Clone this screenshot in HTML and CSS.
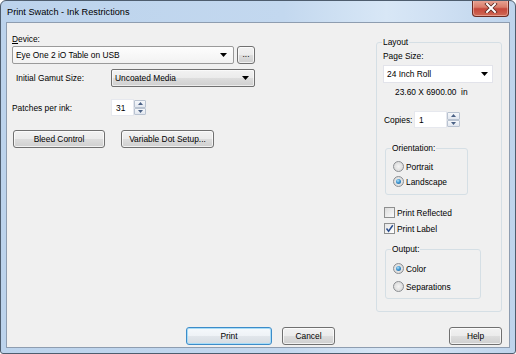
FILE: index.html
```html
<!DOCTYPE html>
<html>
<head>
<meta charset="utf-8">
<link rel="stylesheet" href="styles.css">
</head>
<body>
<div class="window">
  <div class="titlebar">
    <span class="title">Print Swatch - Ink Restrictions</span>
    <div class="close">
      <svg width="14" height="10" viewBox="0 0 14 10"><path d="M3 1 L11 9 M11 1 L3 9" stroke="#5a2a22" stroke-width="3.6" stroke-linecap="square" fill="none"/><path d="M3 1 L11 9 M11 1 L3 9" stroke="#ffffff" stroke-width="2" stroke-linecap="square" fill="none"/></svg>
    </div>
  </div>
  <div class="client">
    <div class="main">
      <div class="left">
        <div class="lbl"><span class="ul">D</span>evice:</div>
        <div class="row device-row">
          <div class="combo combo-light device-combo"><span>Eye One 2 iO Table on USB</span><svg class="arrow" width="7" height="4" viewBox="0 0 7 4"><path d="M0 0 H7 L3.5 4 Z" fill="#000"/></svg></div>
          <div class="btn dots-btn">...</div>
        </div>
        <div class="row gamut-row">
          <span class="row-lbl indent">Initial Gamut Size:</span>
          <div class="combo combo-btn gamut-combo"><span>Uncoated Media</span><svg class="arrow" width="7" height="4" viewBox="0 0 7 4"><path d="M0 0 H7 L3.5 4 Z" fill="#000"/></svg></div>
        </div>
        <div class="row patches-row">
          <span class="row-lbl">Patches per ink:</span>
          <div class="spin">
            <div class="spin-input small">31</div>
            <div class="spin-btns">
              <div class="spin-b"><svg width="5" height="3" viewBox="0 0 5 3"><path d="M0 3 H5 L2.5 0 Z" fill="#4a6185"/></svg></div>
              <div class="spin-b"><svg width="5" height="3" viewBox="0 0 5 3"><path d="M0 0 H5 L2.5 3 Z" fill="#4a6185"/></svg></div>
            </div>
          </div>
        </div>
        <div class="row btn-row">
          <div class="btn bleed-btn">Bleed Control</div>
          <div class="btn vdot-btn">Variable Dot Setup...</div>
        </div>
      </div>
      <div class="group layout-group">
        <span class="legend">Layout</span>
        <div class="lbl">Page Size:</div>
        <div class="combo combo-white page-combo"><span>24 Inch Roll</span><svg class="arrow" width="7" height="4" viewBox="0 0 7 4"><path d="M0 0 H7 L3.5 4 Z" fill="#000"/></svg></div>
        <div class="lbl dims">23.60 X 6900.00 &nbsp;in</div>
        <div class="row copies-row">
          <span class="copies-lbl">Copies:</span>
          <div class="spin">
            <div class="spin-input wide">1</div>
            <div class="spin-btns">
              <div class="spin-b"><svg width="5" height="3" viewBox="0 0 5 3"><path d="M0 3 H5 L2.5 0 Z" fill="#4a6185"/></svg></div>
              <div class="spin-b"><svg width="5" height="3" viewBox="0 0 5 3"><path d="M0 0 H5 L2.5 3 Z" fill="#4a6185"/></svg></div>
            </div>
          </div>
        </div>
        <div class="group orient-group">
          <span class="legend">Orientation:</span>
          <div class="opt"><span class="radio"></span>Portrait</div>
          <div class="opt"><span class="radio on"></span>Landscape</div>
        </div>
        <div class="chk-row first"><span class="chk"></span>Print Reflected</div>
        <div class="chk-row"><span class="chk on"><svg width="9" height="9" viewBox="0 0 9 9"><path d="M1.5 4.5 L3.6 7.2 L7.8 1.2" stroke="#2c4f8f" stroke-width="1.5" fill="none"/></svg></span>Print Label</div>
        <div class="group output-group">
          <span class="legend">Output:</span>
          <div class="opt"><span class="radio on"></span>Color</div>
          <div class="opt gap"><span class="radio"></span>Separations</div>
        </div>
      </div>
    </div>
    <div class="footer">
      <div class="btn print-btn">Print</div>
      <div class="btn cancel-btn">Cancel</div>
      <div class="btn help-btn">Help</div>
    </div>
  </div>
</div>
</body>
</html>
```

FILE: styles.css
```css
* { box-sizing: border-box; }
body {
  margin: 0;
  background: #ffffff;
  font-family: "Liberation Sans", Arial, sans-serif;
  font-size: 8.4px;
  color: #000;
}
.window {
  width: 516px;
  height: 354px;
  border: 1px solid #4e5d6e;
  border-radius: 6px 6px 3px 3px;
  background: linear-gradient(90deg, #bcd3ec 0%, #c3d8ef 55%, #d8e7f6 75%, #cfe0f3 85%, #bed4ec 100%);
  padding: 0 5px 5px 5px;
  display: flex;
  flex-direction: column;
  overflow: hidden;
}
.titlebar {
  height: 21px;
  display: flex;
  align-items: flex-start;
  padding-left: 1px;
}
.title {
  font-size: 9.2px;
  line-height: 12px;
  margin-top: 5px;
  color: #000;
}
.close {
  margin-left: auto;
  margin-right: 1px;
  margin-top: -1px;
  width: 37px;
  height: 17px;
  border: 1px solid #6b2b22;
  border-top: none;
  border-radius: 0 0 4px 4px;
  background: linear-gradient(#e9a797 0%, #d97c6a 45%, #c5473a 55%, #cf6a55 100%);
  box-shadow: inset 0 0 0 1px rgba(255,220,210,0.45);
  display: flex;
  align-items: center;
  justify-content: center;
}
.client {
  flex: 1;
  border: 1px solid #8e9db0;
  background: #f0f0f0;
  display: flex;
  flex-direction: column;
  padding: 0 7px 0 5px;
}
.main {
  display: flex;
  justify-content: space-between;
}
.left {
  width: 243px;
  padding-top: 10px;
}
.lbl { line-height: 12px; height: 12px; }
.ul { text-decoration: underline; }
.row { display: flex; align-items: center; }
.device-row { margin-top: 1px; height: 18px; }
.gamut-row { margin-top: 5px; height: 18px; }
.patches-row { margin-top: 12px; height: 17px; }
.btn-row { margin-top: 14px; height: 18px; }
.row-lbl { width: 99px; flex: none; }
.row-lbl.indent { padding-left: 4px; }

.combo {
  height: 18px;
  display: flex;
  align-items: center;
  padding-left: 3px;
  border-radius: 2px;
}
.combo .arrow { margin-left: auto; flex: none; }
.combo-light {
  border: 1px solid #9a9a9a;
  background: linear-gradient(#fdfdfd, #f2f2f2);
}
.device-combo { width: 222px; }
.device-combo .arrow { margin-right: 6px; }
.combo-btn {
  border: 1px solid #707070;
  background: linear-gradient(#f2f2f2 0%, #ebebeb 50%, #dddddd 51%, #cfcfcf 100%);
  box-shadow: inset 0 0 0 1px rgba(255,255,255,0.6);
}
.gamut-combo { width: 144px; }
.gamut-combo .arrow { margin-right: 5px; }
.combo-white {
  border: 1px solid #e2e3ea;
  background: #ffffff;
  border-radius: 0;
}
.page-combo { width: 110px; margin-top: 3px; }
.page-combo .arrow { margin-right: 4px; }

.btn {
  height: 18px;
  border: 1px solid #707070;
  border-radius: 3px;
  background: linear-gradient(#f2f2f2 0%, #ebebeb 50%, #dddddd 51%, #cfcfcf 100%);
  box-shadow: inset 0 0 0 1px rgba(255,255,255,0.7);
  display: flex;
  align-items: center;
  justify-content: center;
  flex: none;
}
.dots-btn { width: 18px; margin-left: 3px; padding-bottom: 3px; }
.bleed-btn { width: 92px; margin-left: 1px; }
.vdot-btn { width: 93px; margin-left: 16px; }

.spin { display: flex; height: 17px; }
.spin-input {
  background: #ffffff;
  border: 1px solid #e6e8ee;
  display: flex;
  align-items: center;
  padding-left: 4px;
}
.spin-input.small { width: 23px; }
.spin-input.wide { width: 33px; }
.spin-btns {
  width: 12px;
  display: flex;
  flex-direction: column;
  padding: 1px 0;
}
.spin-b {
  flex: 1;
  border: 1px solid #b9c3d1;
  background: linear-gradient(#f6f8fb, #e2e7ef);
  display: flex;
  align-items: center;
  justify-content: center;
  border-radius: 1px;
}

.group {
  position: relative;
  border: 1px solid #d5dfe5;
  border-radius: 3px;
}
.legend {
  position: absolute;
  top: -7px;
  left: 5px;
  padding: 0 1px;
  line-height: 12px;
  background: #f0f0f0;
  white-space: nowrap;
}
.layout-group {
  margin-top: 19px;
  width: 126px;
  height: 270px;
  padding: 7px 0 0 6px;
}
.dims { margin-top: 3px; padding-left: 12px; }
.copies-row { margin-top: 13px; height: 17px; }
.copies-lbl { width: 31px; padding-left: 1px; flex: none; }
.copies-row .spin-btns { width: 13px; }

.orient-group {
  margin-top: 20px;
  margin-left: 2px;
  width: 83px;
  height: 47px;
  padding: 10px 0 0 7px;
}
.output-group {
  margin-top: 14px;
  margin-left: 2px;
  width: 96px;
  height: 50px;
  padding: 11px 0 0 7px;
}
.opt {
  height: 15px;
  display: flex;
  align-items: center;
  white-space: nowrap;
}
.opt.gap { margin-top: 3px; }
.radio {
  width: 11px;
  height: 11px;
  border-radius: 50%;
  border: 1px solid #8b8e92;
  background: radial-gradient(circle at 50% 50%, #f4f4f4 0%, #e0e0e0 60%, #d2d2d2 100%);
  margin-right: 2px;
  flex: none;
  display: flex;
  align-items: center;
  justify-content: center;
}
.radio.on::after {
  content: "";
  width: 5px;
  height: 5px;
  border-radius: 50%;
  background: radial-gradient(circle at 40% 35%, #b5e4f8 0%, #3f96d1 45%, #1a5a93 100%);
}
.chk-row {
  height: 13px;
  display: flex;
  align-items: center;
  margin-left: 1px;
  white-space: nowrap;
}
.chk-row.first { margin-top: 11px; }
.chk-row + .chk-row { margin-top: 3px; }
.chk {
  width: 11px;
  height: 11px;
  border: 1px solid #8e8f8f;
  background: linear-gradient(135deg, #dcdcdc, #fbfbfb);
  margin-right: 2px;
  flex: none;
  display: flex;
  align-items: center;
  justify-content: center;
}
.chk.on { background: linear-gradient(135deg, #e6e6e6, #ffffff); }

.footer {
  display: flex;
  margin-top: 15px;
  padding-left: 174px;
}
.print-btn {
  width: 86px;
  border-color: #3c8cc9;
  box-shadow: inset 0 0 0 1px #a8dcf7;
  background: linear-gradient(#f5f9fc 0%, #eef2f6 50%, #e1e6eb 51%, #d6dce2 100%);
}
.cancel-btn { width: 53px; margin-left: 10px; }
.help-btn { width: 53px; margin-left: auto; }
```
